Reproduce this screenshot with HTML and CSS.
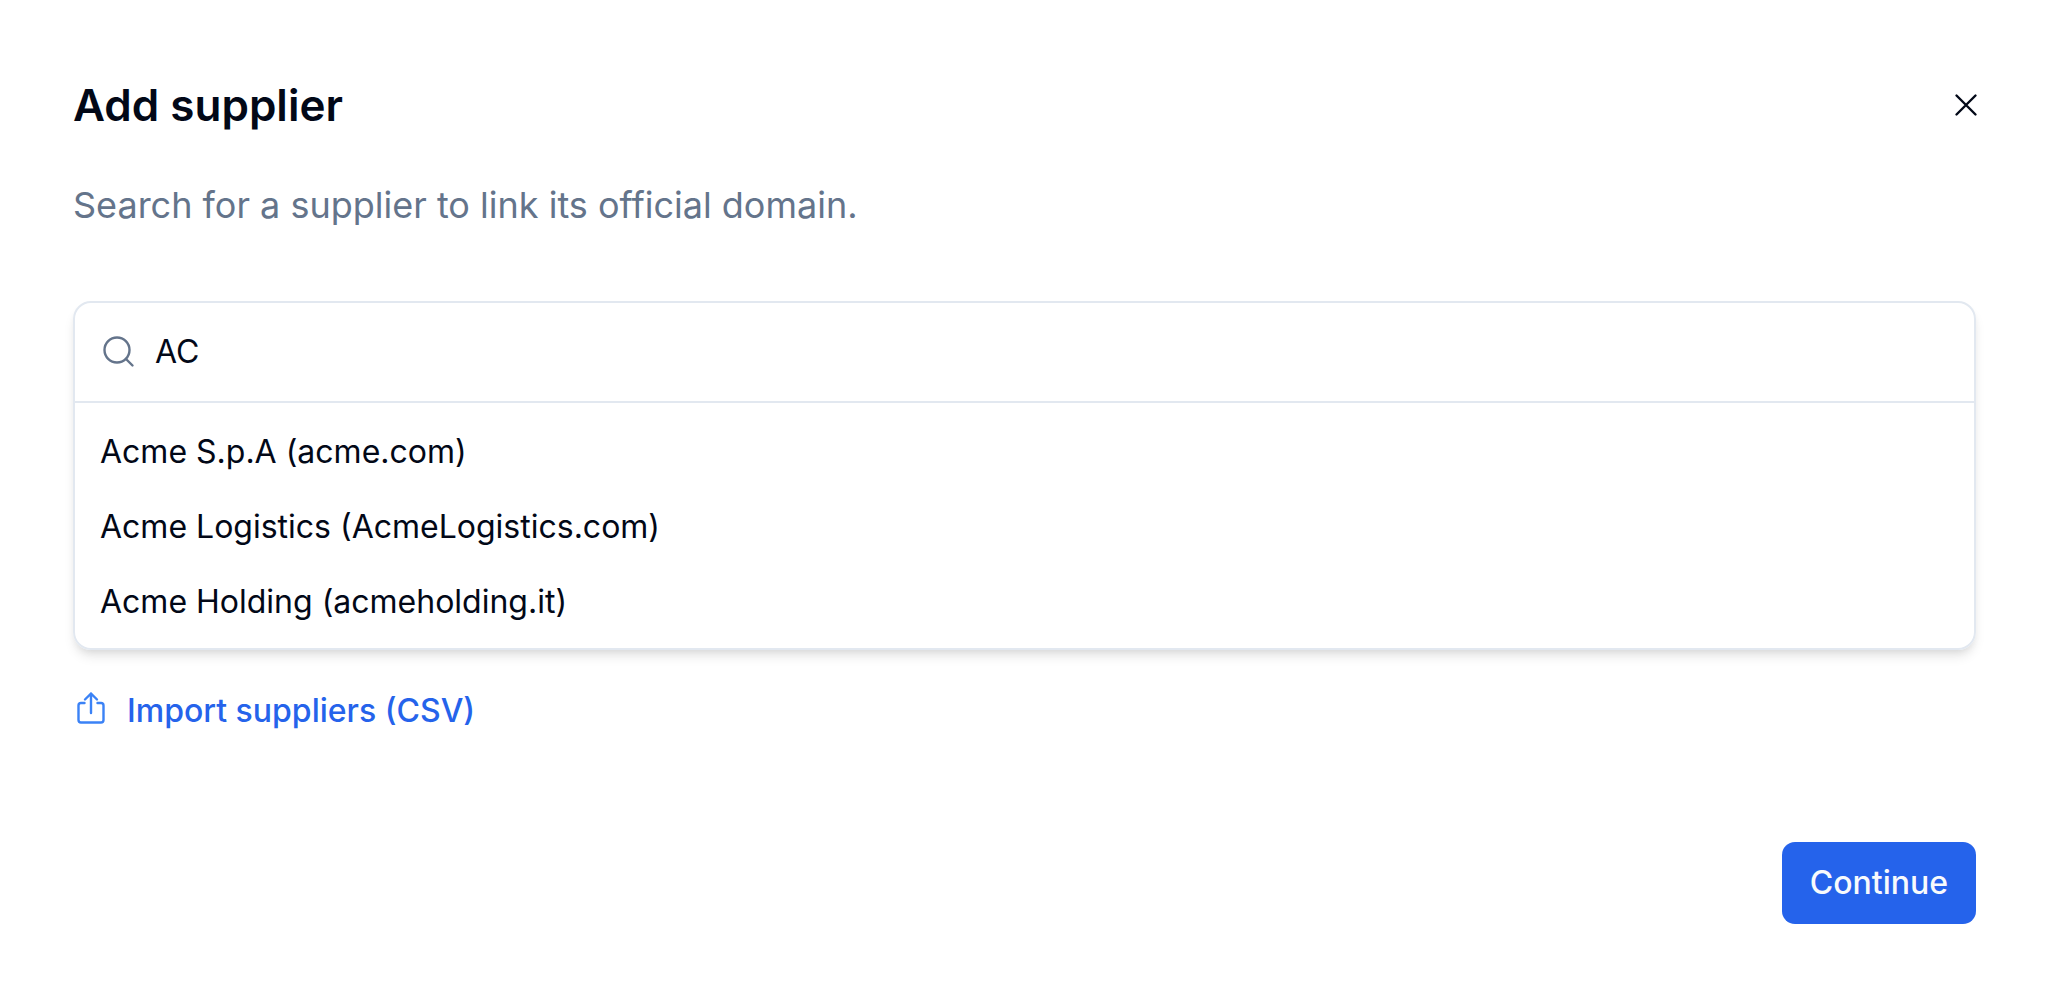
FILE: index.html
```html
<!DOCTYPE html>
<html lang="en">
<head>
<meta charset="utf-8"/>
<meta name="viewport" content="width=device-width, initial-scale=1.0"/>
<title>Add supplier</title>
<link rel="stylesheet" href="styles.css">
</head>
<body>

<main class="dialog">
	<header class="dialog-header">
		<h1>Add supplier</h1>
		<button class="close" type="button" aria-label="Close">
			<svg width="24" height="24" viewBox="0 0 24 24"><path stroke-width="2.4" d="M2.5 2.5l19 19M21.5 2.5l-19 19"/></svg>
		</button>
	</header>
	<p class="description">Search for a supplier to link its official domain.</p>

	<div class="command">
		<label class="search">
			<svg width="32" height="32" viewBox="0 0 32 32"><g stroke-width="2.4"><circle cx="14" cy="14" r="12.5"/><path d="M23 23l6.5 6.5"/></g></svg>
			<input type="text" value="AC" aria-label="Search supplier">
		</label>
		<ul class="results">
			<li><button type="button">Acme S.p.A (acme.com)</button></li>
			<li><button type="button">Acme Logistics (AcmeLogistics.com)</button></li>
			<li><button type="button">Acme Holding (acmeholding.it)</button></li>
		</ul>
	</div>

	<a class="import" href="#import">
		<svg width="32" height="40" viewBox="0 0 32 40"><path stroke-width="2.4" d="M11.5 12H8a2.500 2.500 0 0 0-2.500 2.500v14.500a2.500 2.500 0 0 0 2.500 2.500h20a2.500 2.500 0 0 0 2.500-2.500V14.500a2.500 2.500 0 0 0-2.500-2.500h-3.500M18 22V2.500M12 8.500l6-6 6 6"/></svg>
		Import suppliers (CSV)
	</a>

	<footer class="dialog-footer">
		<button class="continue" type="button">Continue</button>
	</footer>
</main>

</body>
</html>
```

FILE: styles.css
```css
* {
	box-sizing: border-box;
}
body {
	margin: 0;
	background: #fff;
	color: #020817;
	font-family: Inter, "Liberation Sans", sans-serif;
	font-size: 32px;
	line-height: 44px;
}
button, input {
	font: inherit;
	color: inherit;
	background: none;
	border: 0;
	padding: 0;
	margin: 0;
}
button {
	cursor: pointer;
}
svg {
	display: block;
	flex: none;
	fill: none;
	stroke: currentColor;
	stroke-linecap: round;
	stroke-linejoin: round;
}
.dialog {
	padding: 80px 72px 72px 73px;
}
/* header */
.dialog-header {
	display: flex;
	align-items: center;
	justify-content: space-between;
}
h1 {
	margin: 0;
	font-size: 44px;
	line-height: 50px;
	font-weight: 600;
}
.close {
	margin-right: -2px;
}
.description {
	margin: 51px 0 72px;
	font-size: 36px;
	line-height: 48px;
	color: #64748b;
}
/* search box */
.command {
	border: 2px solid #e2e8f0;
	border-radius: 18px;
	box-shadow: 0 8px 12px -2px rgba(0, 0, 0, .1), 0 4px 8px -4px rgba(0, 0, 0, .1);
}
.search {
	display: flex;
	align-items: center;
	gap: 20px;
	height: 100px;
	padding: 0 28px;
	border-bottom: 2px solid #e2e8f0;
}
.search svg {
	color: #64748b;
}
.search input {
	flex: 1;
	min-width: 0;
	outline: none;
}
.results {
	list-style: none;
	margin: 0;
	padding: 11px 9px 9px;
}
.results button {
	display: block;
	width: 100%;
	height: 75px;
	padding: 0 16px;
	text-align: left;
}
/* import link */
.import {
	display: inline-flex;
	align-items: center;
	gap: 22px;
	margin-top: 39px;
	font-weight: 500;
	color: #2563eb;
	text-decoration: none;
}
.import svg {
	color: #3b82f6;
}
/* footer */
.dialog-footer {
	display: flex;
	justify-content: flex-end;
	margin-top: 100px;
}
.continue {
	height: 82px;
	padding: 0 28px;
	border-radius: 13px;
	background: #2563eb;
	color: #f8fafc;
	font-weight: 500;
}
```
